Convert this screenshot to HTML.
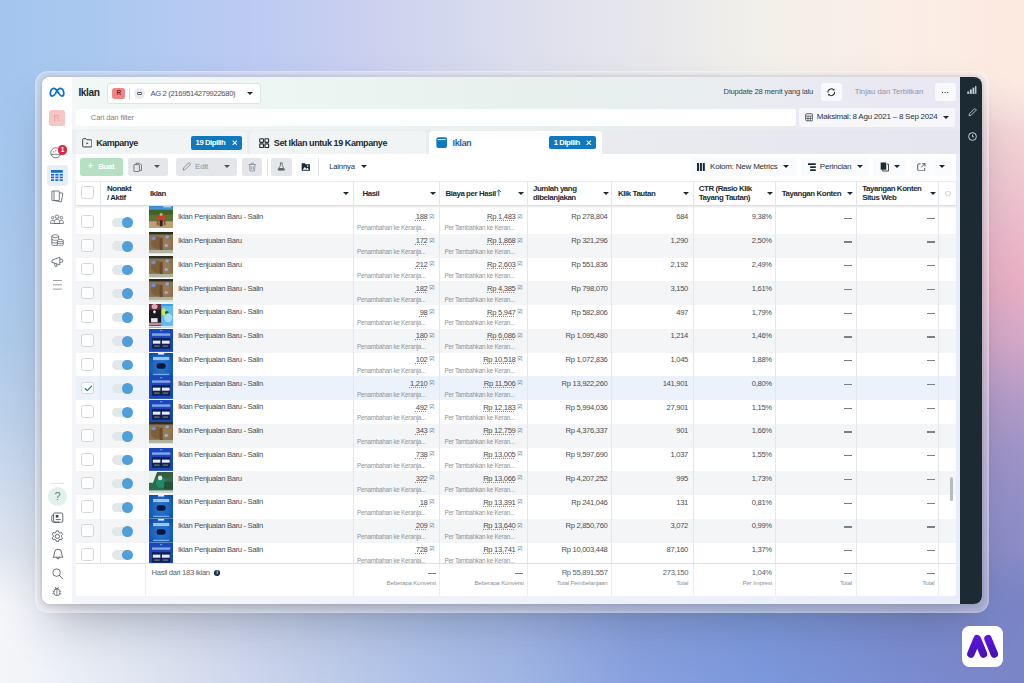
<!DOCTYPE html>
<html lang="id"><head><meta charset="utf-8"><title>Iklan</title>
<style>
*{box-sizing:border-box;margin:0;padding:0}
html,body{width:1024px;height:683px;overflow:hidden}
body{position:relative;font-family:"Liberation Sans",sans-serif;color:#1c2b33;
background:#a8c4ec;
}
.abs,.pg div,.pg svg{position:absolute}

.bgL{position:absolute;left:0;top:0;width:120px;height:683px;background:linear-gradient(180deg,#a4c6ef 0%,#a6c7ee 25%,#afcbea 50%,#bfd3ec 63%,#d2ddee 73%,#e2e7f0 82%,#ebedf2 90%,#f4f4f7 100%)}
.bgR{position:absolute;left:904px;top:0;width:120px;height:683px;background:linear-gradient(180deg,#fcefe6 0%,#f8e6e0 11%,#f2d0d4 22%,#ecbccc 33%,#eab0c4 41%,#d4a8c8 50%,#b49cc8 58.5%,#a094c8 66%,#9490c8 73%,#8a8cc8 82%,#7e88c4 91%,#7a86c4 100%)}
.bgT{position:absolute;left:0;top:0;width:1024px;height:130px;background:linear-gradient(90deg,#a3c5ee 0%,#abc9f0 10%,#bccaf2 24%,#c8cff0 34%,#d4d8ee 44%,#dcdeed 50%,#e6e6ec 62%,#f2f0ea 74%,#fbeee6 88%,#fde9e0 100%);-webkit-mask-image:linear-gradient(180deg,#000 0,#000 72px,transparent 130px);mask-image:linear-gradient(180deg,#000 0,#000 72px,transparent 130px)}
.bgB{position:absolute;left:0;top:553px;width:1024px;height:130px;background:linear-gradient(90deg,#f5f6f9 0%,#eef1f7 5%,#dde3f0 15%,#c4cfea 29%,#a8bce6 44%,#a0b6e4 50%,#88a0de 62%,#7c98dc 74%,#7a8cd0 88%,#7a84c6 100%);-webkit-mask-image:linear-gradient(0deg,#000 0,#000 72px,transparent 130px);mask-image:linear-gradient(0deg,#000 0,#000 72px,transparent 130px)}
.frame{position:absolute;left:35px;top:71px;width:954px;height:541.5px;border-radius:13px;background:rgba(250,247,249,0.40);box-shadow:inset 0 0 0 1.5px rgba(255,255,255,0.18)}
.win{position:absolute;left:42px;top:77px;width:940px;height:527px;border-radius:8px;overflow:hidden;background:#eef1f6}
.ring{position:absolute;left:42px;top:77px;width:940px;height:527px;border-radius:8px;box-shadow:0 0 0 2px rgba(90,80,100,0.07),0 0 0 4.5px rgba(90,80,100,0.04)}
.shadow{position:absolute;left:42px;top:77px;width:940px;height:527px;border-radius:8px;box-shadow:0 24px 46px -10px rgba(60,70,90,0.40),0 8px 16px -6px rgba(60,70,90,0.16),0 2px 12px rgba(55,65,85,0.10)}
.pg{position:absolute;left:-42px;top:-77px;width:1024px;height:683px}
.t{white-space:nowrap;line-height:1}
svg{display:block}
/* table rows */
.tbody{left:76px;top:205.6px;width:880px;height:357.9px;overflow:hidden;background:#fff}
.row{left:0;width:880px;height:23.75px;background:#fff}
.row.alt{background:#f4f5f6}
.row.sel{background:#ebf2fb}
.cb{left:5.4px;top:5.3px;width:12.7px;height:12.7px;border:1px solid #d4d7da;border-radius:2.5px;background:#fff}
.tg{left:36.3px;top:7.7px;width:17px;height:9.4px;border-radius:5px;background:#e3e7ea}
.tg i{position:absolute;display:block;left:9.6px;top:-0.7px;width:10.8px;height:10.8px;border-radius:50%;background:#509fd8}
.th{left:73px;top:0px;width:24.3px}
.nm{left:102px;top:3.3px;font-size:7.7px;letter-spacing:-0.36px;color:#484e55;white-space:nowrap;line-height:1}
.v1,.v2{top:3.5px;font-size:7.6px;letter-spacing:-0.3px;color:#484e55;white-space:nowrap;line-height:1}
.v1 u{text-decoration:underline dotted #8a9096;text-underline-offset:1px;text-decoration-thickness:0.8px}
.mk{top:4.8px;font-size:4.8px;color:#70777e;line-height:1;letter-spacing:-0.3px}
.s1{top:15.3px;font-size:6.3px;letter-spacing:-0.25px;color:#8d949a;white-space:nowrap;line-height:1}
.ds{top:7.6px;width:8px;height:1.2px;background:#7a8086}
.vl{top:180.5px;width:1px;height:415px;background:#e5e7ea}
.hd{font-size:7.9px;font-weight:700;letter-spacing:-0.42px;color:#1c2b33;white-space:nowrap;line-height:9.3px}
.car{width:0;height:0;border-left:3.1px solid transparent;border-right:3.1px solid transparent;border-top:3.5px solid #1c2b33;margin-left:-0.5px;margin-top:-0.2px}
.btn{background:#e4e6e9;border-radius:2.5px}
.ft1{font-size:7.6px;letter-spacing:-0.3px;color:#5b6168;white-space:nowrap;line-height:1;text-align:right}
.ft2{font-size:6.2px;letter-spacing:-0.2px;color:#8d949a;white-space:nowrap;line-height:1;text-align:right}
</style></head>
<body>
<div class="bgL"></div><div class="bgR"></div><div class="bgT"></div><div class="bgB"></div>
<div class="shadow"></div><div class="frame"></div><div class="ring"></div>
<div class="win"><div class="pg">
<!-- header gradient -->
<div style="left:72px;top:77px;width:888px;height:54px;background:linear-gradient(90deg,#f2f8f6 0%,#edf5f2 26%,#e8f1ee 48%,#e9eef0 70%,#e9e9f2 88%,#eae8f3 100%)"></div>
<!-- tab strip -->
<div style="left:72px;top:130px;width:888px;height:24px;background:linear-gradient(90deg,#eceff1 0%,#e9ebef 60%,#e6e6ef 100%)"></div>
<!-- body bg below -->
<div style="left:72px;top:154px;width:888px;height:450px;background:linear-gradient(90deg,#f3f5fa 0%,#eff2f9 50%,#e9edfa 100%)"></div>
<!-- left sidebar -->
<div id="sb" style="left:42px;top:77px;width:30.4px;height:527px;background:#fff"></div>
<!-- right dark bar -->
<div style="left:960px;top:77px;width:22px;height:527px;background:#1c2b33"></div>

<!-- top bar -->
<div class="t" style="left:78.4px;top:87.6px;font-size:10.1px;font-weight:700;letter-spacing:-0.35px;color:#1c2b33">Iklan</div>
<div style="left:107.3px;top:83.4px;width:153.5px;height:20.8px;background:#fff;border:1px solid #dfe3e6;border-radius:3px"></div>
<div style="left:112.3px;top:87.7px;width:13.2px;height:11.6px;border-radius:2.5px;background:#f08585"></div>
<div class="t" style="left:116.6px;top:90.3px;font-size:6.6px;font-weight:700;color:#8a1f1f">R</div>
<div style="left:129.3px;top:87.5px;width:1px;height:12px;background:#d9dcdf"></div>
<div style="left:134.4px;top:88.3px;width:10.8px;height:10.8px;border-radius:50%;background:#e9ebed"></div>
<div style="left:137.3px;top:92px;width:5px;height:3.4px;border:0.9px solid #59626a;border-radius:1px"></div>
<div class="t" style="left:150.4px;top:89.8px;font-size:7.7px;letter-spacing:-0.36px;color:#4a545c">AG 2 (2169514279922680)</div>
<div class="car" style="left:247.6px;top:92.4px"></div>

<div class="t" style="left:723.6px;top:88.4px;font-size:7.6px;letter-spacing:-0.17px;color:#39444c">Diupdate 28 menit yang lalu</div>
<div style="left:821px;top:83.3px;width:21.3px;height:17.5px;background:#f8f9fb;border-radius:2.5px"></div>
<svg style="left:826.4px;top:86.8px" width="10.5" height="10.5" viewBox="0 0 12 12"><path d="M2.2 6.6A3.9 3.9 0 0 1 8.9 3.4M9.8 5.4A3.9 3.9 0 0 1 3.1 8.6" fill="none" stroke="#26323a" stroke-width="1.15"/><path d="M9.6 1.6v2.4H7.2zM2.4 10.4V8h2.4z" fill="#26323a"/></svg>
<div class="t" style="left:854.8px;top:88.4px;font-size:7.7px;letter-spacing:-0.02px;color:#9096a0">Tinjau dan Terbitkan</div>
<div style="left:935px;top:83.3px;width:20.5px;height:17.5px;background:#f8f9fb;border-radius:2.5px"></div>
<div style="left:941.6px;top:91.6px;width:1.6px;height:1.4px;background:#26323a;box-shadow:2.6px 0 0 #26323a,5.2px 0 0 #26323a"></div>

<!-- search bar -->
<div style="left:75.6px;top:109.3px;width:720.5px;height:16.8px;background:#fff;border-radius:2px"></div>
<div class="t" style="left:90.8px;top:113.8px;font-size:7.6px;letter-spacing:-0.13px;color:#7a828a">Cari dan filter</div>
<!-- date picker -->
<div style="left:799.2px;top:108.3px;width:156.3px;height:18.3px;background:#f7f7fb;border-radius:2.5px"></div>
<svg style="left:805px;top:113.2px" width="8.4" height="8.6" viewBox="0 0 10 10"><rect x="0.8" y="0.8" width="8.4" height="8.4" rx="1.4" fill="none" stroke="#39444c" stroke-width="1"/><path d="M0.8 3.6h8.4M0.8 6.4h8.4M3.6 3.6v5.6M6.4 3.6v5.6" stroke="#39444c" stroke-width="0.8" fill="none"/></svg>
<div class="t" style="left:816.8px;top:113.3px;font-size:8px;letter-spacing:-0.24px;color:#26323a">Maksimal: 8 Agu 2021 – 8 Sep 2024</div>
<div class="car" style="left:943.4px;top:116.2px"></div>

<!-- tabs -->
<div style="left:75.6px;top:131.3px;width:171.5px;height:22.8px;background:#f1f4f5;border-radius:4px 4px 0 0"></div>
<svg style="left:81.6px;top:138.2px" width="10.6" height="9.6" viewBox="0 0 11 10"><path d="M0.7 1.6a0.9 0.9 0 0 1 0.9-0.9h2.5l1 1.2h4.3a0.9 0.9 0 0 1 0.9 0.9v5.6a0.9 0.9 0 0 1-0.9 0.9H1.6a0.9 0.9 0 0 1-0.9-0.9z" fill="none" stroke="#26323a" stroke-width="0.95"/><path d="M4.6 4.3l2 1.3-2 1.3z" fill="#26323a"/></svg>
<div class="t" style="left:96.3px;top:138.6px;font-size:9px;font-weight:700;letter-spacing:-0.5px">Kampanye</div>
<div style="left:191.2px;top:136.2px;width:51.2px;height:13.8px;background:#0f78be;border-radius:2px"></div>
<div class="t" style="left:195.6px;top:139.4px;font-size:7.7px;font-weight:700;letter-spacing:-0.45px;color:#fff">19 Dipilih</div>
<svg style="left:231.6px;top:140.4px" width="5.6" height="5.6" viewBox="0 0 6 6"><path d="M0.7 0.7l4.6 4.6M5.3 0.7L0.7 5.3" stroke="#fff" stroke-width="1.1"/></svg>

<div style="left:249.5px;top:131.3px;width:176.8px;height:22.8px;background:#f1f4f5;border-radius:4px 4px 0 0"></div>
<svg style="left:259.4px;top:138px" width="10.4" height="10.4" viewBox="0 0 11 11"><g fill="none" stroke="#26323a" stroke-width="1.25"><rect x="0.8" y="0.8" width="3.9" height="3.9" rx="0.6"/><rect x="6.3" y="0.8" width="3.9" height="3.9" rx="0.6"/><rect x="0.8" y="6.3" width="3.9" height="3.9" rx="0.6"/><rect x="6.3" y="6.3" width="3.9" height="3.9" rx="0.6"/></g></svg>
<div class="t" style="left:273.8px;top:138.6px;font-size:9px;font-weight:700;letter-spacing:-0.42px">Set Iklan untuk 19 Kampanye</div>

<div style="left:428.8px;top:131.3px;width:173.4px;height:23.5px;background:#fff;border-radius:4px 4px 0 0"></div>
<svg style="left:436.2px;top:137px" width="11.4" height="11.2" viewBox="0 0 12 12"><rect x="0.3" y="0.3" width="11.4" height="11.4" rx="2" fill="#0f78be"/><rect x="1.8" y="2.2" width="8.4" height="1.1" fill="#d8ecfa"/><rect x="1.8" y="2.2" width="2" height="1.1" fill="#fff"/></svg>
<div class="t" style="left:452.6px;top:138.6px;font-size:9.2px;font-weight:700;letter-spacing:-0.45px;color:#1f68a8">Iklan</div>
<div style="left:549.3px;top:135.6px;width:47px;height:13.9px;background:#0f78be;border-radius:2px"></div>
<div class="t" style="left:553.8px;top:138.8px;font-size:7.7px;font-weight:700;letter-spacing:-0.45px;color:#fff">1 Dipilih</div>
<svg style="left:586.2px;top:139.8px" width="5.6" height="5.6" viewBox="0 0 6 6"><path d="M0.7 0.7l4.6 4.6M5.3 0.7L0.7 5.3" stroke="#fff" stroke-width="1.1"/></svg>

<!-- toolbar -->
<div style="left:75.6px;top:154px;width:880.4px;height:27px;background:#fff"></div>
<div style="left:80px;top:158.3px;width:42.5px;height:17.5px;background:#b7dfc3;border-radius:2.5px"></div>
<div class="t" style="left:88px;top:162.4px;font-size:8.4px;font-weight:700;letter-spacing:-0.2px;color:#fff">+</div>
<div class="t" style="left:98.2px;top:162.9px;font-size:7.8px;font-weight:700;letter-spacing:-0.3px;color:#fff">Buat</div>
<div class="btn" style="left:127.5px;top:158.3px;width:40.5px;height:17.5px"></div>
<svg style="left:132.6px;top:161.6px" width="9.4" height="10.6" viewBox="0 0 10 11"><g fill="none" stroke="#5f6970" stroke-width="0.9"><path d="M3.2 2.4V1.2h3.9l2 2v5.6H7"/><rect x="1" y="2.6" width="5.8" height="7.4" rx="0.6"/></g></svg>
<div class="car" style="left:154.6px;top:165.6px;border-top-color:#4b555c"></div>
<div class="btn" style="left:176.3px;top:158.3px;width:61.2px;height:17.5px"></div>
<svg style="left:181.6px;top:162.2px" width="9.2" height="9.2" viewBox="0 0 10 10"><path d="M1.2 8.8l0.5-2.3 5.4-5.4a1 1 0 0 1 1.4 0l0.4 0.4a1 1 0 0 1 0 1.4L3.5 8.3z" fill="none" stroke="#7c858c" stroke-width="0.9"/></svg>
<div class="t" style="left:195px;top:162.8px;font-size:8px;letter-spacing:-0.2px;color:#8d959b">Edit</div>
<div class="car" style="left:224.4px;top:165.6px;border-top-color:#4b555c"></div>
<div class="btn" style="left:242px;top:158.3px;width:20px;height:17.5px"></div>
<svg style="left:247.6px;top:162px" width="8.6" height="10" viewBox="0 0 9 10"><g fill="none" stroke="#8d959b" stroke-width="0.9"><path d="M0.6 2.4h7.8M3.2 2.2V1h2.6v1.2M1.6 2.6l0.5 6.6h4.8l0.5-6.6M3.5 4.2v3.6M5.5 4.2v3.6"/></g></svg>
<div style="left:267.2px;top:158.3px;width:1px;height:17.5px;background:#e1e4e7"></div>
<div class="btn" style="left:271.3px;top:158.3px;width:20.4px;height:17.5px"></div>
<svg style="left:277.2px;top:162.4px" width="8.6" height="9" viewBox="0 0 10 10"><path d="M3.600 0.800h2.800M4 0.800v3L1.200 8.400a0.600 0.600 0 0 0 0.500 0.900h6.600a0.600 0.600 0 0 0 0.500-0.900L6 3.800v-3" fill="none" stroke="#5a646c" stroke-width="0.950"/><path d="M2.600 6.600h4.800l1 1.900a0.400 0.400 0 0 1-0.300 0.600H1.900a0.400 0.400 0 0 1-0.300-0.600z" fill="#5a646c"/></svg>
<div style="left:295.5px;top:158.3px;width:20.4px;height:17.5px;background:#fafbfb;border-radius:2.5px"></div>
<svg style="left:300.8px;top:162.2px" width="9.6" height="9.4" viewBox="0 0 10 10"><path d="M0.6 1.2h3.4l0.8 1.200h4.600v7H0.600z" fill="#1c2b33"/><path d="M1.600 8.200l2.300-3 1.700 2 1.200-1.200 1.700 2.200z" fill="#fff"/><circle cx="7" cy="4.300" r="0.800" fill="#fff"/></svg>
<div style="left:318.2px;top:158.3px;width:1px;height:17.5px;background:#e1e4e7"></div>
<div class="t" style="left:329.2px;top:162.8px;font-size:7.7px;letter-spacing:-0.2px;color:#26323a">Lainnya</div>
<div class="car" style="left:361.2px;top:165.6px"></div>

<div style="left:691.3px;top:158.3px;width:105.7px;height:17.5px;background:#fafbfc;border-radius:2.5px"></div>
<div style="left:697.4px;top:163px;width:2px;height:7.6px;background:#1c2b33;box-shadow:2.9px 0 0 #1c2b33,5.8px 0 0 #1c2b33"></div>
<div class="t" style="left:710px;top:162.7px;font-size:8px;letter-spacing:-0.2px;color:#26323a">Kolom: New Metrics</div>
<div class="car" style="left:783.6px;top:165.6px"></div>
<div style="left:800.5px;top:158.3px;width:68.8px;height:17.5px;background:#fafbfc;border-radius:2.5px"></div>
<svg style="left:808px;top:162.8px" width="7.8" height="8.2" viewBox="0 0 8 8"><path d="M0 0h8v1.8H0zM2.2 3.1H8v1.8H2.2zM2.2 6.2H8V8H2.2z" fill="#1c2b33"/></svg>
<div class="t" style="left:819.8px;top:162.7px;font-size:8px;letter-spacing:-0.2px;color:#26323a">Perincian</div>
<div class="car" style="left:857.2px;top:165.6px"></div>
<div style="left:873px;top:158.3px;width:33.3px;height:17.5px;background:#fafbfc;border-radius:2.5px"></div>
<svg style="left:879.6px;top:162.2px" width="9.2" height="9.6" viewBox="0 0 9 10"><path d="M0.4 0.6h5.8v7.4H0.4z" fill="#1c2b33"/><path d="M7 2.2h1.6v7.2H2.4V8.6" fill="none" stroke="#1c2b33" stroke-width="0.9"/></svg>
<div class="car" style="left:894.2px;top:165.6px"></div>
<div style="left:910.5px;top:158.3px;width:42.5px;height:17.5px;background:#fafbfc;border-radius:2.5px"></div>
<svg style="left:917.2px;top:162.6px" width="8.6" height="8.6" viewBox="0 0 9 9"><path d="M3.8 0.9H1.6a0.8 0.8 0 0 0-0.8 0.8v5.7a0.8 0.8 0 0 0 0.8 0.8h5.7a0.8 0.8 0 0 0 0.8-0.8V5.2" fill="none" stroke="#39444c" stroke-width="0.9"/><path d="M5.4 0.7h2.9v2.9M8.2 0.8L4.4 4.6" fill="none" stroke="#39444c" stroke-width="0.9"/></svg>
<div style="left:931.2px;top:158.3px;width:1px;height:17.5px;background:#fff"></div>
<div class="car" style="left:939.2px;top:165.6px"></div>

<!-- table -->
<div style="left:75.6px;top:180.5px;width:880.4px;height:415px;background:#fff;border-radius:0 0 3px 3px"></div>
<div class="tbody">
<div class="row" style="top:4.40px">
<div class="cb"></div><div class="tg"><i></i></div><svg class="th" style="height:22.3px;top:-4.4px" viewBox="0 0 24 22.6" preserveAspectRatio="none"><rect width="24" height="22.6" fill="#5a7332"/><rect y="0" width="24" height="3.9" fill="#3f97dc"/><rect x="14" y="0" width="8" height="1.4" fill="#bfe0f6"/><rect y="3.9" width="24" height="5" fill="#47602a"/><rect y="15.5" width="24" height="7.1" fill="#bda173"/><ellipse cx="12" cy="12" rx="4.2" ry="3.4" fill="#c4402f"/><rect x="7.6" y="13.5" width="2" height="6" fill="#8a5a38"/><rect x="14.4" y="13.5" width="2" height="6" fill="#8a5a38"/><rect x="10.5" y="14.5" width="3" height="6" fill="#2a2420"/><circle cx="12" cy="8.6" r="1.5" fill="#d9a77f"/></svg>
<div class="nm">Iklan Penjualan Baru - Salin</div>
<div class="v1" style="right:528.5px"><u>188</u></div><div class="mk" style="left:353.5px">[2]</div>
<div class="s1" style="left:281px">Penambahan ke Keranja...</div>
<div class="v1" style="right:440.5px"><u>Rp 1,483</u></div><div class="mk" style="left:441.5px">[2]</div>
<div class="s1" style="left:368.5px">Per Tambahkan ke Keran...</div>
<div class="v2" style="right:348.5px">Rp 278,804</div>
<div class="v2" style="right:268.0px">684</div>
<div class="v2" style="right:184.2px">9,38%</div>
<div class="ds" style="left:768px"></div><div class="ds" style="left:850.5px"></div>
</div>
<div class="row alt" style="top:28.16px">
<div class="cb"></div><div class="tg"><i></i></div><svg class="th" style="height:22.2px;top:-1.8px" viewBox="0 0 24 24" preserveAspectRatio="none"><rect width="24" height="24" fill="#8a7450"/><rect width="24" height="2.600" fill="#2a2f24"/><rect y="19.400" width="24" height="3" fill="#aab69e"/><rect y="22.400" width="24" height="1.600" fill="#dde4da"/><ellipse cx="8" cy="12" rx="6" ry="6.500" fill="#7d5f3c"/><ellipse cx="16.500" cy="12" rx="5" ry="6.500" fill="#9a7a55"/><rect x="10.500" y="6.500" width="3" height="13" fill="#6b4a30"/><circle cx="4.600" cy="6.800" r="2" fill="#6f8fd8"/><circle cx="18" cy="5.200" r="1.800" fill="#8aa6e0"/><circle cx="17" cy="14.500" r="1.600" fill="#9aaee8"/></svg>
<div class="nm">Iklan Penjualan Baru</div>
<div class="v1" style="right:528.5px"><u>172</u></div><div class="mk" style="left:353.5px">[2]</div>
<div class="s1" style="left:281px">Penambahan ke Keranja...</div>
<div class="v1" style="right:440.5px"><u>Rp 1,868</u></div><div class="mk" style="left:441.5px">[2]</div>
<div class="s1" style="left:368.5px">Per Tambahkan ke Keran...</div>
<div class="v2" style="right:348.5px">Rp 321,296</div>
<div class="v2" style="right:268.0px">1,290</div>
<div class="v2" style="right:184.2px">2,50%</div>
<div class="ds" style="left:768px"></div><div class="ds" style="left:850.5px"></div>
</div>
<div class="row" style="top:51.92px">
<div class="cb"></div><div class="tg"><i></i></div><svg class="th" style="height:22.2px;top:-1.8px" viewBox="0 0 24 24" preserveAspectRatio="none"><rect width="24" height="24" fill="#8a7450"/><rect width="24" height="2.600" fill="#2a2f24"/><rect y="19.400" width="24" height="3" fill="#aab69e"/><rect y="22.400" width="24" height="1.600" fill="#dde4da"/><ellipse cx="8" cy="12" rx="6" ry="6.500" fill="#7d5f3c"/><ellipse cx="16.500" cy="12" rx="5" ry="6.500" fill="#9a7a55"/><rect x="10.500" y="6.500" width="3" height="13" fill="#6b4a30"/><circle cx="4.600" cy="6.800" r="2" fill="#6f8fd8"/><circle cx="18" cy="5.200" r="1.800" fill="#8aa6e0"/><circle cx="17" cy="14.500" r="1.600" fill="#9aaee8"/></svg>
<div class="nm">Iklan Penjualan Baru</div>
<div class="v1" style="right:528.5px"><u>212</u></div><div class="mk" style="left:353.5px">[2]</div>
<div class="s1" style="left:281px">Penambahan ke Keranja...</div>
<div class="v1" style="right:440.5px"><u>Rp 2,603</u></div><div class="mk" style="left:441.5px">[2]</div>
<div class="s1" style="left:368.5px">Per Tambahkan ke Keran...</div>
<div class="v2" style="right:348.5px">Rp 551,836</div>
<div class="v2" style="right:268.0px">2,192</div>
<div class="v2" style="right:184.2px">2,49%</div>
<div class="ds" style="left:768px"></div><div class="ds" style="left:850.5px"></div>
</div>
<div class="row alt" style="top:75.68px">
<div class="cb"></div><div class="tg"><i></i></div><svg class="th" style="height:22.2px;top:-1.8px" viewBox="0 0 24 24" preserveAspectRatio="none"><rect width="24" height="24" fill="#8a7450"/><rect width="24" height="2.600" fill="#2a2f24"/><rect y="19.400" width="24" height="3" fill="#aab69e"/><rect y="22.400" width="24" height="1.600" fill="#dde4da"/><ellipse cx="8" cy="12" rx="6" ry="6.500" fill="#7d5f3c"/><ellipse cx="16.500" cy="12" rx="5" ry="6.500" fill="#9a7a55"/><rect x="10.500" y="6.500" width="3" height="13" fill="#6b4a30"/><circle cx="4.600" cy="6.800" r="2" fill="#6f8fd8"/><circle cx="18" cy="5.200" r="1.800" fill="#8aa6e0"/><circle cx="17" cy="14.500" r="1.600" fill="#9aaee8"/></svg>
<div class="nm">Iklan Penjualan Baru - Salin</div>
<div class="v1" style="right:528.5px"><u>182</u></div><div class="mk" style="left:353.5px">[2]</div>
<div class="s1" style="left:281px">Penambahan ke Keranja...</div>
<div class="v1" style="right:440.5px"><u>Rp 4,385</u></div><div class="mk" style="left:441.5px">[2]</div>
<div class="s1" style="left:368.5px">Per Tambahkan ke Keran...</div>
<div class="v2" style="right:348.5px">Rp 798,070</div>
<div class="v2" style="right:268.0px">3,150</div>
<div class="v2" style="right:184.2px">1,61%</div>
<div class="ds" style="left:768px"></div><div class="ds" style="left:850.5px"></div>
</div>
<div class="row" style="top:99.44px">
<div class="cb"></div><div class="tg"><i></i></div><svg class="th" style="height:23.6px;top:-1px" viewBox="0 0 24 24" preserveAspectRatio="none"><rect width="24" height="24" fill="#62bcf0"/><rect width="12" height="24" fill="#1b1a22"/><rect x="0" y="0" width="12" height="6" fill="#5a3038"/><ellipse cx="5.500" cy="2.600" rx="3" ry="2.600" fill="#e2a6ae"/><ellipse cx="5.400" cy="8" rx="1.300" ry="1.600" fill="#f0e8e8"/><rect x="2" y="14.400" width="6.500" height="4.200" fill="#dfeaf4"/><rect x="0" y="19" width="12" height="2.600" fill="#c88a90"/><rect x="12" y="0" width="12" height="2" fill="#3f9be0"/><ellipse cx="14.600" cy="8" rx="2" ry="4" fill="#c4e85a"/><ellipse cx="17.600" cy="9" rx="1.800" ry="2" fill="#1c5a50"/><ellipse cx="19" cy="14" rx="4" ry="4.500" fill="#a8dcf6"/><rect x="0" y="22.200" width="24" height="1.800" fill="#d4e6f6"/></svg>
<div class="nm">Iklan Penjualan Baru - Salin</div>
<div class="v1" style="right:528.5px"><u>98</u></div><div class="mk" style="left:353.5px">[2]</div>
<div class="s1" style="left:281px">Penambahan ke Keranja...</div>
<div class="v1" style="right:440.5px"><u>Rp 5,947</u></div><div class="mk" style="left:441.5px">[2]</div>
<div class="s1" style="left:368.5px">Per Tambahkan ke Keran...</div>
<div class="v2" style="right:348.5px">Rp 582,806</div>
<div class="v2" style="right:268.0px">497</div>
<div class="v2" style="right:184.2px">1,79%</div>
<div class="ds" style="left:768px"></div><div class="ds" style="left:850.5px"></div>
</div>
<div class="row alt" style="top:123.20px">
<div class="cb"></div><div class="tg"><i></i></div><svg class="th" style="height:22.9px;top:0.1px" viewBox="0 0 24 24" preserveAspectRatio="none"><rect width="24" height="24" fill="#1a48b6"/><rect x="11" y="1.4" width="2" height="0.9" fill="#9db8ee"/><rect x="3" y="4.600" width="18" height="2.500" fill="#86a6ea"/><rect x="3" y="9.600" width="18" height="11" fill="#0f1f56"/><rect x="3.800" y="12.200" width="7.400" height="3.200" fill="#e6ecfb"/><rect x="12.800" y="12.200" width="7.600" height="3.200" fill="#e6ecfb"/><rect x="5" y="17.200" width="5.500" height="1.500" fill="#60785a"/><rect x="13.500" y="17.200" width="5.500" height="1.500" fill="#60785a"/></svg>
<div class="nm">Iklan Penjualan Baru - Salin</div>
<div class="v1" style="right:528.5px"><u>180</u></div><div class="mk" style="left:353.5px">[2]</div>
<div class="s1" style="left:281px">Penambahan ke Keranja...</div>
<div class="v1" style="right:440.5px"><u>Rp 6,086</u></div><div class="mk" style="left:441.5px">[2]</div>
<div class="s1" style="left:368.5px">Per Tambahkan ke Keran...</div>
<div class="v2" style="right:348.5px">Rp 1,095,480</div>
<div class="v2" style="right:268.0px">1,214</div>
<div class="v2" style="right:184.2px">1,46%</div>
<div class="ds" style="left:768px"></div><div class="ds" style="left:850.5px"></div>
</div>
<div class="row" style="top:146.96px">
<div class="cb"></div><div class="tg"><i></i></div><svg class="th" style="height:23.7px;top:0px" viewBox="0 0 24 24" preserveAspectRatio="none"><defs><radialGradient id="ge" cx="0.5" cy="0.55" r="0.7"><stop offset="0" stop-color="#2a7fd6"/><stop offset="1" stop-color="#0c4aa8"/></radialGradient></defs><rect width="24" height="24" fill="url(#ge)"/><rect x="9" y="0" width="6" height="1.6" fill="#e8f0fc"/><rect x="4" y="4" width="16" height="3.2" fill="#9cc4f4"/><rect x="7.5" y="10.5" width="9" height="5.5" rx="2.4" fill="#0a1640"/><rect x="4" y="21" width="16" height="1.2" fill="#7fb0ee"/></svg>
<div class="nm">Iklan Penjualan Baru - Salin</div>
<div class="v1" style="right:528.5px"><u>102</u></div><div class="mk" style="left:353.5px">[2]</div>
<div class="s1" style="left:281px">Penambahan ke Keranja...</div>
<div class="v1" style="right:440.5px"><u>Rp 10,518</u></div><div class="mk" style="left:441.5px">[2]</div>
<div class="s1" style="left:368.5px">Per Tambahkan ke Keran...</div>
<div class="v2" style="right:348.5px">Rp 1,072,836</div>
<div class="v2" style="right:268.0px">1,045</div>
<div class="v2" style="right:184.2px">1,88%</div>
<div class="ds" style="left:768px"></div><div class="ds" style="left:850.5px"></div>
</div>
<div class="row alt sel" style="top:170.72px">
<div class="cb"><svg viewBox="0 0 12 12" width="12.4" height="12.4" style="position:absolute;left:-0.6px;top:-0.6px"><path d="M3 6.3l2.1 2.1L9.2 3.9" fill="none" stroke="#1f7f92" stroke-width="1.1" stroke-linecap="round" stroke-linejoin="round"/></svg></div><div class="tg"><i></i></div><svg class="th" style="height:22.9px;top:0.1px" viewBox="0 0 24 24" preserveAspectRatio="none"><rect width="24" height="24" fill="#1a48b6"/><rect x="11" y="1.4" width="2" height="0.9" fill="#9db8ee"/><rect x="3" y="4.600" width="18" height="2.500" fill="#86a6ea"/><rect x="3" y="9.600" width="18" height="11" fill="#0f1f56"/><rect x="3.800" y="12.200" width="7.400" height="3.200" fill="#e6ecfb"/><rect x="12.800" y="12.200" width="7.600" height="3.200" fill="#e6ecfb"/><rect x="5" y="17.200" width="5.500" height="1.500" fill="#60785a"/><rect x="13.500" y="17.200" width="5.500" height="1.500" fill="#60785a"/></svg>
<div class="nm">Iklan Penjualan Baru - Salin</div>
<div class="v1" style="right:528.5px"><u>1,210</u></div><div class="mk" style="left:353.5px">[2]</div>
<div class="s1" style="left:281px">Penambahan ke Keranja...</div>
<div class="v1" style="right:440.5px"><u>Rp 11,506</u></div><div class="mk" style="left:441.5px">[2]</div>
<div class="s1" style="left:368.5px">Per Tambahkan ke Keran...</div>
<div class="v2" style="right:348.5px">Rp 13,922,260</div>
<div class="v2" style="right:268.0px">141,901</div>
<div class="v2" style="right:184.2px">0,80%</div>
<div class="ds" style="left:768px"></div><div class="ds" style="left:850.5px"></div>
</div>
<div class="row" style="top:194.48px">
<div class="cb"></div><div class="tg"><i></i></div><svg class="th" style="height:22.9px;top:0.1px" viewBox="0 0 24 24" preserveAspectRatio="none"><rect width="24" height="24" fill="#1a48b6"/><rect x="11" y="1.4" width="2" height="0.9" fill="#9db8ee"/><rect x="3" y="4.600" width="18" height="2.500" fill="#86a6ea"/><rect x="3" y="9.600" width="18" height="11" fill="#0f1f56"/><rect x="3.800" y="12.200" width="7.400" height="3.200" fill="#e6ecfb"/><rect x="12.800" y="12.200" width="7.600" height="3.200" fill="#e6ecfb"/><rect x="5" y="17.200" width="5.500" height="1.500" fill="#60785a"/><rect x="13.500" y="17.200" width="5.500" height="1.500" fill="#60785a"/></svg>
<div class="nm">Iklan Penjualan Baru - Salin</div>
<div class="v1" style="right:528.5px"><u>492</u></div><div class="mk" style="left:353.5px">[2]</div>
<div class="s1" style="left:281px">Penambahan ke Keranja...</div>
<div class="v1" style="right:440.5px"><u>Rp 12,183</u></div><div class="mk" style="left:441.5px">[2]</div>
<div class="s1" style="left:368.5px">Per Tambahkan ke Keran...</div>
<div class="v2" style="right:348.5px">Rp 5,994,036</div>
<div class="v2" style="right:268.0px">27,901</div>
<div class="v2" style="right:184.2px">1,15%</div>
<div class="ds" style="left:768px"></div><div class="ds" style="left:850.5px"></div>
</div>
<div class="row alt" style="top:218.24px">
<div class="cb"></div><div class="tg"><i></i></div><svg class="th" style="height:22.2px;top:-1.8px" viewBox="0 0 24 24" preserveAspectRatio="none"><rect width="24" height="24" fill="#8a7450"/><rect width="24" height="2.600" fill="#2a2f24"/><rect y="19.400" width="24" height="3" fill="#aab69e"/><rect y="22.400" width="24" height="1.600" fill="#dde4da"/><ellipse cx="8" cy="12" rx="6" ry="6.500" fill="#7d5f3c"/><ellipse cx="16.500" cy="12" rx="5" ry="6.500" fill="#9a7a55"/><rect x="10.500" y="6.500" width="3" height="13" fill="#6b4a30"/><circle cx="4.600" cy="6.800" r="2" fill="#6f8fd8"/><circle cx="18" cy="5.200" r="1.800" fill="#8aa6e0"/><circle cx="17" cy="14.500" r="1.600" fill="#9aaee8"/></svg>
<div class="nm">Iklan Penjualan Baru - Salin</div>
<div class="v1" style="right:528.5px"><u>343</u></div><div class="mk" style="left:353.5px">[2]</div>
<div class="s1" style="left:281px">Penambahan ke Keranja...</div>
<div class="v1" style="right:440.5px"><u>Rp 12,759</u></div><div class="mk" style="left:441.5px">[2]</div>
<div class="s1" style="left:368.5px">Per Tambahkan ke Keran...</div>
<div class="v2" style="right:348.5px">Rp 4,376,337</div>
<div class="v2" style="right:268.0px">901</div>
<div class="v2" style="right:184.2px">1,66%</div>
<div class="ds" style="left:768px"></div><div class="ds" style="left:850.5px"></div>
</div>
<div class="row" style="top:242.00px">
<div class="cb"></div><div class="tg"><i></i></div><svg class="th" style="height:22.9px;top:0.1px" viewBox="0 0 24 24" preserveAspectRatio="none"><rect width="24" height="24" fill="#1a48b6"/><rect x="11" y="1.4" width="2" height="0.9" fill="#9db8ee"/><rect x="3" y="4.600" width="18" height="2.500" fill="#86a6ea"/><rect x="3" y="9.600" width="18" height="11" fill="#0f1f56"/><rect x="3.800" y="12.200" width="7.400" height="3.200" fill="#e6ecfb"/><rect x="12.800" y="12.200" width="7.600" height="3.200" fill="#e6ecfb"/><rect x="5" y="17.200" width="5.500" height="1.500" fill="#60785a"/><rect x="13.500" y="17.200" width="5.500" height="1.500" fill="#60785a"/></svg>
<div class="nm">Iklan Penjualan Baru - Salin</div>
<div class="v1" style="right:528.5px"><u>738</u></div><div class="mk" style="left:353.5px">[2]</div>
<div class="s1" style="left:281px">Penambahan ke Keranja...</div>
<div class="v1" style="right:440.5px"><u>Rp 13,005</u></div><div class="mk" style="left:441.5px">[2]</div>
<div class="s1" style="left:368.5px">Per Tambahkan ke Keran...</div>
<div class="v2" style="right:348.5px">Rp 9,597,690</div>
<div class="v2" style="right:268.0px">1,037</div>
<div class="v2" style="right:184.2px">1,55%</div>
<div class="ds" style="left:768px"></div><div class="ds" style="left:850.5px"></div>
</div>
<div class="row alt" style="top:265.76px">
<div class="cb"></div><div class="tg"><i></i></div><svg class="th" style="height:21.6px;top:0.4px" viewBox="0 0 24 20" preserveAspectRatio="none"><rect width="24" height="20" fill="#2f6a4a"/><rect width="24" height="5" fill="#3a5a40"/><path d="M0 0h8l-4 10H0z" fill="#e8eee8"/><ellipse cx="12" cy="10" rx="5" ry="5" fill="#1f8a68"/><circle cx="11" cy="5.5" r="2.2" fill="#e0e8e4"/><rect x="15" y="9" width="9" height="7" fill="#27503a"/><rect y="17" width="24" height="3" fill="#c8d8d0"/></svg>
<div class="nm">Iklan Penjualan Baru</div>
<div class="v1" style="right:528.5px"><u>322</u></div><div class="mk" style="left:353.5px">[2]</div>
<div class="s1" style="left:281px">Penambahan ke Keranja...</div>
<div class="v1" style="right:440.5px"><u>Rp 13,066</u></div><div class="mk" style="left:441.5px">[2]</div>
<div class="s1" style="left:368.5px">Per Tambahkan ke Keran...</div>
<div class="v2" style="right:348.5px">Rp 4,207,252</div>
<div class="v2" style="right:268.0px">995</div>
<div class="v2" style="right:184.2px">1,73%</div>
<div class="ds" style="left:768px"></div><div class="ds" style="left:850.5px"></div>
</div>
<div class="row" style="top:289.52px">
<div class="cb"></div><div class="tg"><i></i></div><svg class="th" style="height:23.7px;top:0px" viewBox="0 0 24 24" preserveAspectRatio="none"><defs><radialGradient id="ge" cx="0.5" cy="0.55" r="0.7"><stop offset="0" stop-color="#2a7fd6"/><stop offset="1" stop-color="#0c4aa8"/></radialGradient></defs><rect width="24" height="24" fill="url(#ge)"/><rect x="9" y="0" width="6" height="1.6" fill="#e8f0fc"/><rect x="4" y="4" width="16" height="3.2" fill="#9cc4f4"/><rect x="7.5" y="10.5" width="9" height="5.5" rx="2.4" fill="#0a1640"/><rect x="4" y="21" width="16" height="1.2" fill="#7fb0ee"/></svg>
<div class="nm">Iklan Penjualan Baru - Salin</div>
<div class="v1" style="right:528.5px"><u>18</u></div><div class="mk" style="left:353.5px">[2]</div>
<div class="s1" style="left:281px">Penambahan ke Keranja...</div>
<div class="v1" style="right:440.5px"><u>Rp 13,391</u></div><div class="mk" style="left:441.5px">[2]</div>
<div class="s1" style="left:368.5px">Per Tambahkan ke Keran...</div>
<div class="v2" style="right:348.5px">Rp 241,046</div>
<div class="v2" style="right:268.0px">131</div>
<div class="v2" style="right:184.2px">0,81%</div>
<div class="ds" style="left:768px"></div><div class="ds" style="left:850.5px"></div>
</div>
<div class="row alt" style="top:313.28px">
<div class="cb"></div><div class="tg"><i></i></div><svg class="th" style="height:23.7px;top:0px" viewBox="0 0 24 24" preserveAspectRatio="none"><defs><radialGradient id="ge" cx="0.5" cy="0.55" r="0.7"><stop offset="0" stop-color="#2a7fd6"/><stop offset="1" stop-color="#0c4aa8"/></radialGradient></defs><rect width="24" height="24" fill="url(#ge)"/><rect x="9" y="0" width="6" height="1.6" fill="#e8f0fc"/><rect x="4" y="4" width="16" height="3.2" fill="#9cc4f4"/><rect x="7.5" y="10.5" width="9" height="5.5" rx="2.4" fill="#0a1640"/><rect x="4" y="21" width="16" height="1.2" fill="#7fb0ee"/></svg>
<div class="nm">Iklan Penjualan Baru - Salin</div>
<div class="v1" style="right:528.5px"><u>209</u></div><div class="mk" style="left:353.5px">[2]</div>
<div class="s1" style="left:281px">Penambahan ke Keranja...</div>
<div class="v1" style="right:440.5px"><u>Rp 13,640</u></div><div class="mk" style="left:441.5px">[2]</div>
<div class="s1" style="left:368.5px">Per Tambahkan ke Keran...</div>
<div class="v2" style="right:348.5px">Rp 2,850,760</div>
<div class="v2" style="right:268.0px">3,072</div>
<div class="v2" style="right:184.2px">0,99%</div>
<div class="ds" style="left:768px"></div><div class="ds" style="left:850.5px"></div>
</div>
<div class="row" style="top:337.04px">
<div class="cb"></div><div class="tg"><i></i></div><svg class="th" style="height:22.9px;top:0.1px" viewBox="0 0 24 24" preserveAspectRatio="none"><rect width="24" height="24" fill="#1a48b6"/><rect x="11" y="1.4" width="2" height="0.9" fill="#9db8ee"/><rect x="3" y="4.600" width="18" height="2.500" fill="#86a6ea"/><rect x="3" y="9.600" width="18" height="11" fill="#0f1f56"/><rect x="3.800" y="12.200" width="7.400" height="3.200" fill="#e6ecfb"/><rect x="12.800" y="12.200" width="7.600" height="3.200" fill="#e6ecfb"/><rect x="5" y="17.200" width="5.500" height="1.500" fill="#60785a"/><rect x="13.500" y="17.200" width="5.500" height="1.500" fill="#60785a"/></svg>
<div class="nm">Iklan Penjualan Baru - Salin</div>
<div class="v1" style="right:528.5px"><u>728</u></div><div class="mk" style="left:353.5px">[2]</div>
<div class="s1" style="left:281px">Penambahan ke Keranja...</div>
<div class="v1" style="right:440.5px"><u>Rp 13,741</u></div><div class="mk" style="left:441.5px">[2]</div>
<div class="s1" style="left:368.5px">Per Tambahkan ke Keran...</div>
<div class="v2" style="right:348.5px">Rp 10,003,448</div>
<div class="v2" style="right:268.0px">87,160</div>
<div class="v2" style="right:184.2px">1,37%</div>
<div class="ds" style="left:768px"></div><div class="ds" style="left:850.5px"></div>
</div>
</div>
<!-- header row -->
<div style="left:75.6px;top:180.5px;width:880.4px;height:25.2px;background:#fff;border-top:1px solid #eceef0;border-bottom:1px solid #dcdfe2;box-shadow:0 1px 2px rgba(0,0,0,0.10)"></div>
<div style="left:81.4px;top:186.4px;width:12.6px;height:12.8px;border:1px solid #d4d7da;border-radius:2.5px;background:#fff"></div>
<div class="hd" style="left:107px;top:184.1px">Nonakt<br>/ Aktif</div>
<div class="hd" style="left:150px;top:188.6px">Iklan</div>
<div class="hd" style="left:362.4px;top:188.6px">Hasil</div>
<div class="hd" style="left:445.4px;top:188.6px">Biaya per Hasil</div>
<svg style="left:496.4px;top:188.6px" width="5.6" height="7.6" viewBox="0 0 6 8"><path d="M3 7.6V1M0.6 3.2L3 0.8l2.4 2.4" fill="none" stroke="#1b74d0" stroke-width="1.05"/></svg>
<div class="hd" style="left:533px;top:184.1px">Jumlah yang<br>dibelanjakan</div>
<div class="hd" style="left:618px;top:188.6px">Klik Tautan</div>
<div class="hd" style="left:698.8px;top:184.1px">CTR (Rasio Klik<br>Tayang Tautan)</div>
<div class="hd" style="left:781.8px;top:188.6px">Tayangan Konten</div>
<div class="hd" style="left:862.2px;top:184.1px">Tayangan Konten<br>Situs Web</div>
<div class="car" style="left:343.2px;top:192.4px"></div>
<div class="car" style="left:430px;top:192.4px"></div>
<div class="car" style="left:518px;top:192.4px"></div>
<div class="car" style="left:603px;top:192.4px"></div>
<div class="car" style="left:683.8px;top:192.4px"></div>
<div class="car" style="left:767.4px;top:192.4px"></div>
<div class="car" style="left:847.2px;top:192.4px"></div>
<div class="car" style="left:930.4px;top:192.4px"></div>
<div style="left:945.4px;top:191.2px;width:5.2px;height:5.2px;border-radius:50%;border:1.4px solid #c9cdd1"></div>
<!-- column lines -->
<div class="vl" style="left:100.2px"></div>
<div class="vl" style="left:144.8px;top:206px;height:358px;background:#f1f2f4"></div>
<div class="vl" style="left:353.4px"></div>
<div class="vl" style="left:439.2px"></div>
<div class="vl" style="left:527.2px"></div>
<div class="vl" style="left:611.3px"></div>
<div class="vl" style="left:692.8px"></div>
<div class="vl" style="left:775.2px"></div>
<div class="vl" style="left:856.3px"></div>
<div class="vl" style="left:938.3px"></div>
<!-- footer -->
<div style="left:75.6px;top:563.4px;width:880.4px;height:32.2px;background:#fff;border-top:1px solid #dfe2e5;border-radius:0 0 3px 3px"></div>
<div class="vl" style="left:144.8px;top:564px;height:31.5px;background:#eceef0"></div>
<div class="vl" style="left:353.4px;top:564px;height:31.5px;background:#eceef0"></div>
<div class="vl" style="left:439.2px;top:564px;height:31.5px;background:#eceef0"></div>
<div class="vl" style="left:527.2px;top:564px;height:31.5px;background:#eceef0"></div>
<div class="vl" style="left:611.3px;top:564px;height:31.5px;background:#eceef0"></div>
<div class="vl" style="left:692.8px;top:564px;height:31.5px;background:#eceef0"></div>
<div class="vl" style="left:775.2px;top:564px;height:31.5px;background:#eceef0"></div>
<div class="vl" style="left:856.3px;top:564px;height:31.5px;background:#eceef0"></div>
<div class="vl" style="left:938.3px;top:564px;height:31.5px;background:#eceef0"></div>
<div class="t" style="left:151.6px;top:569.4px;font-size:7.6px;letter-spacing:-0.3px;color:#5b6168">Hasil dari 183 iklan</div>
<div style="left:214.4px;top:570.2px;width:5.6px;height:5.6px;border-radius:50%;background:#26323a"></div>
<div class="t" style="left:216.5px;top:570.9px;font-size:4.6px;font-weight:700;color:#fff">i</div>
<div class="ds" style="left:427.6px;top:572.6px"></div>
<div class="ft2" style="right:588.2px;top:580.4px">Beberapa Konversi</div>
<div class="ds" style="left:515.4px;top:572.6px"></div>
<div class="ft2" style="right:500.4px;top:580.4px">Beberapa Konversi</div>
<div class="ft1" style="right:416.4px;top:569.4px">Rp 55,891,557</div>
<div class="ft2" style="right:416.4px;top:580.4px">Total Pembelanjaan</div>
<div class="ft1" style="right:335.8px;top:569.4px">273,150</div>
<div class="ft2" style="right:335.8px;top:580.4px">Total</div>
<div class="ft1" style="right:252.2px;top:569.4px">1,04%</div>
<div class="ft2" style="right:252.2px;top:580.4px">Per Impresi</div>
<div class="ds" style="left:844px;top:572.6px"></div>
<div class="ft2" style="right:172px;top:580.4px">Total</div>
<div class="ds" style="left:926.5px;top:572.6px"></div>
<div class="ft2" style="right:89.6px;top:580.4px">Total</div>
<!-- scrollbar thumb -->
<div style="left:949.8px;top:477.3px;width:3.2px;height:23.5px;border-radius:1.6px;background:#b9bbbd"></div>

<!-- SIDEBAR ICONS -->
<!-- meta logo -->
<svg style="left:49.4px;top:87.2px" width="16" height="10.4" viewBox="0 0 16 10.4"><path d="M1.3 6.6C1.3 3.6 2.9 1.3 4.7 1.3 6.9 1.3 8.6 4.3 10 6.6c1 1.6 1.9 2.5 3 2.5 1.2 0 1.8-1.1 1.8-2.6 0-2.9-1.5-5.2-3.4-5.2C9.300 1.300 7.800 4 6.500 6.300 5.500 8 4.600 9.100 3.300 9.100 2 9.100 1.300 8.100 1.300 6.600z" fill="none" stroke="#0a6fd8" stroke-width="1.7" stroke-linejoin="round"/></svg>
<div style="left:49px;top:109.9px;width:15.6px;height:16px;border-radius:2.5px;background:#f8c5c5"></div>
<div class="t" style="left:53.6px;top:113.9px;font-size:8.6px;color:#d9a3a3">R</div>
<!-- gauge with badge -->
<svg style="left:50.4px;top:147.4px" width="11.6" height="11.6" viewBox="0 0 12 12"><circle cx="6" cy="6" r="5.2" fill="#fff" stroke="#4a545c" stroke-width="0.8"/><path d="M1 7.600h10" stroke="#4a545c" stroke-width="0.76"/><circle cx="3.8" cy="5" r="0.6" fill="#4a545c"/><circle cx="6" cy="3.800" r="0.600" fill="#4a545c"/></svg>
<div style="left:57.9px;top:145.3px;width:9.4px;height:9.4px;border-radius:50%;background:#d62a3e"></div>
<div class="t" style="left:60.8px;top:146.9px;font-size:6.6px;font-weight:700;color:#fff">1</div>
<!-- selected table icon -->
<div style="left:46.6px;top:165.4px;width:21.4px;height:20.2px;border-radius:3px;background:#e6eef9"></div>
<svg style="left:51.4px;top:169.9px" width="11.8" height="11" viewBox="0 0 12 11"><g fill="#1469cf"><rect x="0" y="0" width="12" height="2.7"/><rect x="0" y="3.9" width="3.2" height="1.7"/><rect x="4.400" y="3.900" width="3.200" height="1.700"/><rect x="8.8" y="3.9" width="3.2" height="1.7"/><rect x="0" y="6.6" width="3.200" height="1.700"/><rect x="4.4" y="6.6" width="3.2" height="1.7"/><rect x="8.800" y="6.600" width="3.200" height="1.700"/><rect x="0" y="9.3" width="3.2" height="1.7"/><rect x="4.4" y="9.3" width="3.200" height="1.700"/><rect x="8.8" y="9.300" width="3.2" height="1.7"/></g></svg>
<!-- pages -->
<svg style="left:50.8px;top:189.8px" width="13" height="13" viewBox="0 0 13 13"><g fill="none" stroke="#4a545c" stroke-width="0.76"><rect x="0.9" y="1" width="7.4" height="9.6" rx="0.5"/><path d="M8.4 2.6l3.500 0.700-1.600 8.600-6.800-1.300"/><path d="M3 1.200v9.200"/></g></svg>
<!-- people -->
<svg style="left:50.2px;top:213.6px" width="14" height="10.4" viewBox="0 0 14 10.4"><g fill="none" stroke="#4a545c" stroke-width="0.71"><circle cx="7" cy="2.700" r="1.7"/><path d="M4.200 9.600V8a2.800 2.800 0 0 1 5.600 0v1.600z"/><circle cx="2.700" cy="3.700" r="1.300"/><path d="M0.600 9.600V8.400a2.100 2.100 0 0 1 3.200-1.800"/><circle cx="11.3" cy="3.700" r="1.300"/><path d="M13.400 9.600V8.400a2.100 2.100 0 0 0-3.200-1.800"/><path d="M0.600 9.600h12.800"/></g></svg>
<!-- coins -->
<svg style="left:50.800px;top:234px" width="13" height="12.400" viewBox="0 0 13 12.4"><g fill="none" stroke="#4a545c" stroke-width="0.71"><ellipse cx="4.200" cy="2.200" rx="3.400" ry="1.400"/><path d="M0.800 2.200v8c0 0.800 1.500 1.400 3.400 1.400 0.800 0 1.500-0.100 2.100-0.300M7.600 2.200v3"/><path d="M0.800 4.900c0 0.800 1.500 1.400 3.400 1.400 0.700 0 1.400-0.100 2-0.200M0.800 7.600c0 0.800 1.500 1.400 3.400 1.400 0.700 0 1.300-0.100 1.800-0.200"/><ellipse cx="9.300" cy="6.600" rx="2.900" ry="1.200"/><path d="M6.400 6.600v4.200c0 0.700 1.300 1.200 2.900 1.200s2.900-0.500 2.900-1.200V6.600M6.400 8.700c0 0.700 1.300 1.200 2.900 1.200s2.900-0.500 2.900-1.200"/></g></svg>
<!-- megaphone -->
<svg style="left:51px;top:255.600px" width="12.6" height="11.800" viewBox="0 0 12.6 11.8"><g fill="none" stroke="#4a545c" stroke-width="0.76" stroke-linejoin="round"><path d="M1 4.200l7.800-3v7.600L1 6.400z"/><path d="M8.800 3.200h1.400a1.600 1.600 0 0 1 0 3.200H8.800"/><path d="M3.200 7.100l1.200 3.600 1.800-0.600-0.900-2.400"/></g></svg>
<!-- hamburger -->
<div style="left:52.600px;top:279.6px;width:9.400px;height:1px;background:#9aa1a7;box-shadow:0 4.300px 0 #9aa1a7,0 8.600px 0 #9aa1a7"></div>
<!-- bottom group -->
<div style="left:50.400px;top:483px;width:13.200px;height:1px;background:#dfe2e5"></div>
<div style="left:48.200px;top:487.300px;width:18.600px;height:18.600px;border-radius:50%;background:#e2f1ea"></div>
<div class="t" style="left:54.600px;top:491.300px;font-size:11px;color:#6d7b80">?</div>
<svg style="left:51.400px;top:511.500px" width="12.600" height="11.400" viewBox="0 0 12.6 11.4"><g fill="none" stroke="#3c464e" stroke-width="0.8"><rect x="2.600" y="1" width="9.200" height="9.200" rx="1.200"/><path d="M2.600 3.200H1.800a1 1 0 0 0-1 1v4.400a1.600 1.600 0 0 0 1.600 1.600h6"/><path d="M4.800 7.600h5"/></g><rect x="4.800" y="3" width="2.600" height="2.600" fill="#3c464e"/></svg>
<svg style="left:51.200px;top:529.600px" width="12.800" height="12.800" viewBox="0 0 12.8 12.8"><g fill="none" stroke="#3c464e" stroke-width="0.8" stroke-linejoin="round"><path d="M5.300 0.900h2.200l0.400 1.500 1.100 0.600 1.500-0.500 1.100 1.900-1.100 1.100v1.300l1.100 1.100-1.100 1.900-1.500-0.500-1.100 0.600-0.400 1.500H5.300l-0.400-1.500-1.100-0.600-1.500 0.500-1.100-1.900 1.100-1.100V5.500L1.200 4.400l1.100-1.900 1.500 0.500 1.100-0.600z"/><circle cx="6.400" cy="6.400" r="2.100"/></g></svg>
<svg style="left:51.600px;top:547.600px" width="12" height="13" viewBox="0 0 12 13"><g fill="none" stroke="#3c464e" stroke-width="0.8" stroke-linejoin="round"><path d="M6 1.200a3.600 3.600 0 0 1 3.600 3.600c0 2.400 0.600 3.400 1.400 4.400H1c0.800-1 1.400-2 1.400-4.400A3.600 3.600 0 0 1 6 1.200z"/><path d="M4.600 9.400a1.400 1.400 0 0 0 2.800 0"/></g></svg>
<svg style="left:51.8px;top:567.6px" width="11.4" height="11.4" viewBox="0 0 12.8 12.800"><g fill="none" stroke="#3c464e" stroke-width="0.84"><circle cx="5.200" cy="5.200" r="4.200"/><path d="M8.300 8.300l3.800 3.800" stroke-linecap="round"/></g></svg>
<svg style="left:52.3px;top:585.8px" width="9.8" height="10.6" viewBox="0 0 12.200 13.200"><g fill="none" stroke="#3c464e" stroke-width="0.8"><ellipse cx="6.100" cy="8" rx="3.700" ry="4.400"/><path d="M6.100 3.600v8.800M3.600 4.600a2.600 2.600 0 0 1 5 0M0.600 6.200l2 0.800M0.400 9.600h2M11.600 6.200l-2 0.800M11.800 9.600h-2M3.800 1l1 1.600M8.400 1l-1 1.600"/></g></svg>
<!-- right dark bar icons -->
<svg style="left:967.4px;top:85.600px" width="9.400" height="8.800" viewBox="0 0 9.400 8.800"><g fill="#c6ced3"><rect x="0.300" y="5.400" width="1.900" height="2.400"/><rect x="2.900" y="3.400" width="1.900" height="4.400"/><rect x="5.500" y="1.600" width="1.900" height="6.200"/><rect x="0" y="7.800" width="9.400" height="1"/><rect x="8.100" y="0" width="1.300" height="7.800"/></g></svg>
<svg style="left:967.800px;top:108.400px" width="8.800" height="8.800" viewBox="0 0 10 10"><path d="M1.200 8.800l0.500-2.300 5.400-5.400a1 1 0 0 1 1.400 0l0.400 0.400a1 1 0 0 1 0 1.400L3.500 8.300z" fill="none" stroke="#c6ced3" stroke-width="1"/></svg>
<svg style="left:967.600px;top:131.800px" width="9" height="9" viewBox="0 0 9 9"><circle cx="4.500" cy="4.500" r="3.900" fill="none" stroke="#c6ced3" stroke-width="1"/><path d="M4.500 2.400v2.400h1.600" fill="none" stroke="#c6ced3" stroke-width="0.900"/></svg>

</div></div>
<!-- logo -->
<div class="abs" style="left:962px;top:626px;width:41px;height:41px;border-radius:7.5px;background:#fff"></div>
<svg class="abs" style="left:962px;top:626px" width="41" height="41" viewBox="0 0 41 41"><defs><linearGradient id="lg" x1="0" y1="0" x2="0" y2="1"><stop offset="0" stop-color="#5a14dc"/><stop offset="1" stop-color="#4a12b4"/></linearGradient></defs><g fill="none" stroke="url(#lg)" stroke-width="7.5" stroke-linecap="round" stroke-linejoin="round"><path d="M8.9 28L15.2 12.7 21.5 28"/><path d="M26 12.7L32.3 28"/></g></svg>
</body></html>
